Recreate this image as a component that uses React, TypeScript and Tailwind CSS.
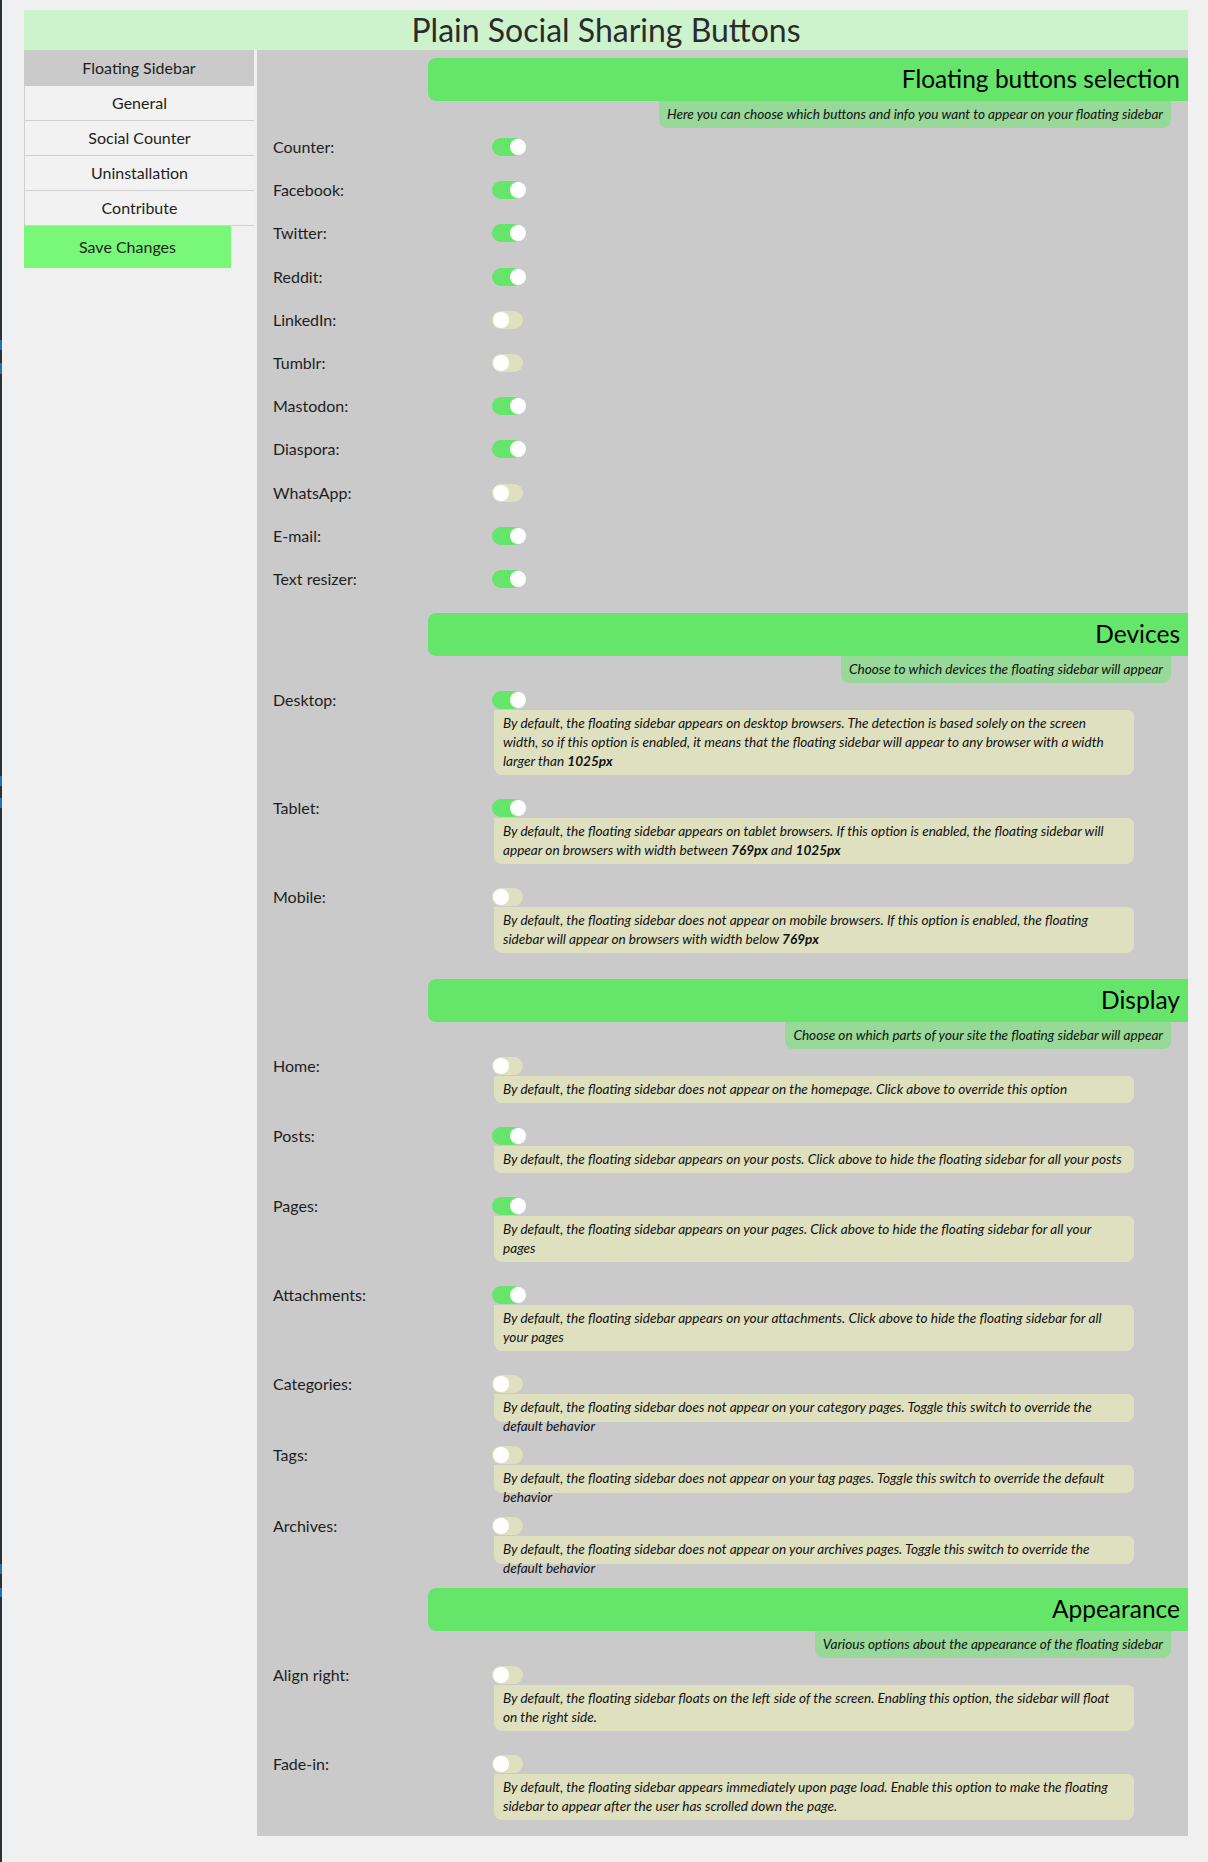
import React from "react";

type Row = { label: string; on: boolean; lines?: React.ReactNode[]; fixed?: boolean };

const buttons: Row[] = [
  { label: "Counter", on: true },
  { label: "Facebook", on: true },
  { label: "Twitter", on: true },
  { label: "Reddit", on: true },
  { label: "LinkedIn", on: false },
  { label: "Tumblr", on: false },
  { label: "Mastodon", on: true },
  { label: "Diaspora", on: true },
  { label: "WhatsApp", on: false },
  { label: "E-mail", on: true },
  { label: "Text resizer", on: true },
];

const devices: Row[] = [
  {
    label: "Desktop",
    on: true,
    lines: [
      "By default, the floating sidebar appears on desktop browsers. The detection is based solely on the screen",
      "width, so if this option is enabled, it means that the floating sidebar will appear to any browser with a width",
      <>
        larger than <b>1025px</b>
      </>,
    ],
  },
  {
    label: "Tablet",
    on: true,
    lines: [
      "By default, the floating sidebar appears on tablet browsers. If this option is enabled, the floating sidebar will",
      <>
        appear on browsers with width between <b>769px</b> and <b>1025px</b>
      </>,
    ],
  },
  {
    label: "Mobile",
    on: false,
    lines: [
      "By default, the floating sidebar does not appear on mobile browsers. If this option is enabled, the floating",
      <>
        sidebar will appear on browsers with width below <b>769px</b>
      </>,
    ],
  },
];

const display: Row[] = [
  { label: "Home", on: false, lines: ["By default, the floating sidebar does not appear on the homepage. Click above to override this option"] },
  {
    label: "Posts",
    on: true,
    lines: ["By default, the floating sidebar appears on your posts. Click above to hide the floating sidebar for all your posts"],
  },
  {
    label: "Pages",
    on: true,
    lines: ["By default, the floating sidebar appears on your pages. Click above to hide the floating sidebar for all your", "pages"],
  },
  {
    label: "Attachments",
    on: true,
    lines: ["By default, the floating sidebar appears on your attachments. Click above to hide the floating sidebar for all", "your pages"],
  },
  {
    label: "Categories",
    on: false,
    fixed: true,
    lines: ["By default, the floating sidebar does not appear on your category pages. Toggle this switch to override the", "default behavior"],
  },
  {
    label: "Tags",
    on: false,
    fixed: true,
    lines: ["By default, the floating sidebar does not appear on your tag pages. Toggle this switch to override the default", "behavior"],
  },
  {
    label: "Archives",
    on: false,
    fixed: true,
    lines: ["By default, the floating sidebar does not appear on your archives pages. Toggle this switch to override the", "default behavior"],
  },
];

const appearance: Row[] = [
  {
    label: "Align right",
    on: false,
    lines: ["By default, the floating sidebar floats on the left side of the screen. Enabling this option, the sidebar will float", "on the right side."],
  },
  {
    label: "Fade-in",
    on: false,
    lines: [
      "By default, the floating sidebar appears immediately upon page load. Enable this option to make the floating",
      "sidebar to appear after the user has scrolled down the page.",
    ],
  },
];

const menu = ["Floating Sidebar", "General", "Social Counter", "Uninstallation", "Contribute"];

function Toggle({ on }: { on: boolean }) {
  return (
    <span className={`relative block w-[31px] h-[18px] rounded-full ${on ? "bg-[#65e66a]" : "bg-[#dfe0bf]"}`}>
      <span className={`absolute top-[1px] w-[16px] h-[16px] rounded-full bg-white ${on ? "left-[18px]" : "left-[1px]"}`} />
    </span>
  );
}

function SectionHead({ title, caption, className }: { title: string; caption: string; className: string }) {
  return (
    <div className={`flex flex-col ${className}`}>
      <div className="ml-[171px] h-[43px] bg-[#65e66a] rounded-l-[8px] flex items-center justify-end pr-[8px] text-[24.5px] text-black">
        {title}
      </div>
      <div className="self-end mr-[17px] h-[27px] bg-[#98d898] rounded-b-[8px] px-[8px] flex items-center text-[13.6px] italic text-[#111]">
        {caption}
      </div>
    </div>
  );
}

function DescRows({ rows }: { rows: Row[] }) {
  return (
    <div className="flex flex-col gap-[24px] pl-[16px] pt-[8px]">
      {rows.map((r) => (
        <div key={r.label} className="flex">
          <div className="w-[219px] h-[18px] flex items-center text-[16px] text-[#1e1e1e]">{r.label}:</div>
          <div className="flex flex-col">
            <Toggle on={r.on} />
            <div
              className={`mt-[1px] ml-[2px] w-[640px] bg-[#dfe0bf] rounded-tr-[6px] rounded-b-[8px] pl-[9px] py-[4px] text-[13.6px] leading-[19px] italic text-[#111] ${
                r.fixed ? "h-[28px]" : ""
              }`}
            >
              {r.lines?.map((l, i) => (
                <div key={i} className="whitespace-nowrap h-[19px]">
                  {l}
                </div>
              ))}
            </div>
          </div>
        </div>
      ))}
    </div>
  );
}

export default function App() {
  return (
    <div className="flex min-h-[1862px] bg-[#f0f0f0] font-[Lato,sans-serif]">
      <div className="w-[2px] shrink-0 bg-[#2c3338] flex flex-col">
        <div className="mt-[340px] h-[10px] bg-[#2271b1]" />
        <div className="mt-[13px] h-[11px] bg-[#2271b1]" />
        <div className="mt-[402px] h-[10px] bg-[#2271b1]" />
        <div className="mt-[12px] h-[10px] bg-[#2271b1]" />
        <div className="mt-[756px] h-[10px] bg-[#2271b1]" />
        <div className="mt-[14px] h-[9px] bg-[#2271b1]" />
      </div>
      <div className="ml-[22px] mt-[10px] w-[1164px]">
        <div className="h-[40px] bg-[#ccf3cc] flex items-center justify-center text-[32px] text-[#2b2b2b]">
          Plain Social Sharing Buttons
        </div>
        <div className="flex gap-[3px]">
          <div className="w-[230px] shrink-0 flex flex-col">
            {menu.map((m, i) => (
              <div
                key={m}
                className={`flex items-center justify-center text-[16px] text-[#1e1e1e] ${
                  i === 0 ? "h-[36px] bg-[#cacaca]" : "h-[35px] bg-[#f2f2f2] border-l border-b border-[#cfcfcf]"
                }`}
              >
                {m}
              </div>
            ))}
            <div className="w-[207px] h-[42px] bg-[#78f778] flex items-center justify-center text-[16px] text-[#1e1e1e]">
              Save Changes
            </div>
          </div>
          <div className="w-[931px] bg-[#cacaca] pt-[8px] pb-[16px] flex flex-col">
            <SectionHead
              className=""
              title="Floating buttons selection"
              caption="Here you can choose which buttons and info you want to appear on your floating sidebar"
            />
            <div className="flex flex-col gap-[25.2px] pl-[16px] pt-[10px]">
              {buttons.map((b) => (
                <div key={b.label} className="flex items-center h-[18px]">
                  <div className="w-[219px] text-[16px] text-[#1e1e1e]">{b.label}:</div>
                  <Toggle on={b.on} />
                </div>
              ))}
            </div>
            <SectionHead className="mt-[25px]" title="Devices" caption="Choose to which devices the floating sidebar will appear" />
            <DescRows rows={devices} />
            <SectionHead
              className="mt-[26px]"
              title="Display"
              caption="Choose on which parts of your site the floating sidebar will appear"
            />
            <DescRows rows={display} />
            <SectionHead
              className="mt-[24px]"
              title="Appearance"
              caption="Various options about the appearance of the floating sidebar"
            />
            <DescRows rows={appearance} />
          </div>
        </div>
      </div>
    </div>
  );
}
